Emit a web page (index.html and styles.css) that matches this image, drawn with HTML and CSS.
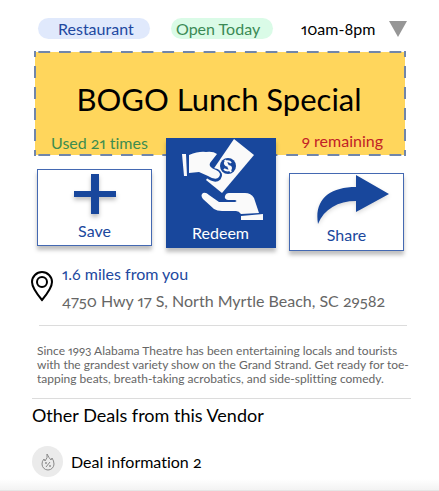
FILE: index.html
```html
<!DOCTYPE html>
<html lang="en">
<head>
<meta charset="utf-8">
<meta name="viewport" content="width=device-width, initial-scale=1">
<title>BOGO Lunch Special</title>
<link rel="stylesheet" href="styles.css">
</head>
<body>
<main class="page">
  <header class="meta">
    <span class="pill pill-category">Restaurant</span>
    <span class="pill pill-open">Open Today</span>
    <button class="hours" type="button">10am-8pm
      <svg class="caret" viewBox="0 0 18 16" aria-hidden="true"><path d="M0 0h18L9 16z"/></svg>
    </button>
  </header>

  <section class="coupon">
    <h1 class="coupon-title">BOGO Lunch Special</h1>
    <div class="coupon-stats">
      <span class="used">Used 21 times</span>
      <span class="remaining">9 remaining</span>
    </div>
  </section>

  <div class="actions">
    <button class="action save" type="button">
      <svg class="icon-plus" viewBox="0 0 42 42" aria-hidden="true"><path d="M17 1h8v17h17v6H25v17h-8V24H0v-6h17z"/></svg>
      <span>Save</span>
    </button>
    <button class="action redeem" type="button">
      <svg class="icon-redeem" viewBox="0 0 84 84" aria-hidden="true">
        <path class="light" d="M55 1 75 17 43 55 27 42z"/>
        <path class="hand-edge" d="M10 17Q25 12 34 15L38 17 30 27Q30 31 38 33Q43 36 40 40Q36 44 28 38L20 34 10 35z"/>
        <path class="light" d="M3 16H7L8 38H5zM10 17Q20 13 27 14Q34 13 38 16L31 25Q29 29 37 32Q43 35 40 39Q37 43 29 38L20 34 10 35z"/>
        <circle class="dark" cx="49" cy="28" r="8"/>
        <path class="dollar" d="M52 25C50 22 45 23 46 26C47 29 52 27 52 30C52 33 47 33 45 31M46 22L52 34"/>
        <path class="light" d="M24 55Q27 54 30 57L40 64H56Q59 63 56 62H49Q45 61 46 58Q47 55 50 55H66Q72 55 75 60L80 75 62 76Q60 73 57 73H43Q38 73 35 71L24 61Q21 57 24 55z"/>
        <path class="light" d="M62 78 84 76V82H62z"/>
      </svg>
      <span>Redeem</span>
    </button>
    <button class="action share" type="button">
      <svg class="icon-share" viewBox="0 0 72 49" aria-hidden="true"><path d="M39 0 72 19 39 37V26C21 26 7 34 1 49C-3 25 12 12 39 12z"/></svg>
      <span>Share</span>
    </button>
  </div>

  <section class="location">
    <svg class="icon-pin" viewBox="0 0 24 32" aria-hidden="true">
      <path d="M12 30Q2 18 2 12A10 10 0 0 1 22 12Q22 18 12 30z"/>
      <circle cx="12" cy="12" r="5"/>
    </svg>
    <div class="location-text">
      <a class="distance" href="#map">1.6 miles from you</a>
      <address class="address">4750 Hwy 17 S, North Myrtle Beach, SC 29582</address>
    </div>
  </section>

  <p class="about">Since 1993 Alabama Theatre has been entertaining locals and tourists with the grandest variety show on the Grand Strand. Get ready for toe-tapping beats, breath-taking acrobatics, and side-splitting comedy.</p>

  <section class="others">
    <h2 class="others-title">Other Deals from this Vendor</h2>
    <a class="deal" href="#deal-2">
      <span class="deal-badge">
        <svg class="icon-flame" viewBox="0 0 14 18" aria-hidden="true">
          <path d="M6 1Q8 5 10 7L11 5Q13 8 13 11A6 6 0 0 1 1 11Q1 8 3 6L4 8Q7 5 6 1zM9 9 5 14"/>
          <circle cx="5" cy="10" r=".6"/><circle cx="9" cy="13" r=".6"/>
        </svg>
      </span>
      Deal information 2
    </a>
  </section>
</main>
<div class="bottom-edge"></div>
</body>
</html>
```
FILE: styles.css
```css
* { box-sizing: border-box; }

body {
  margin: 0;
  min-height: 100vh;
  display: flex;
  flex-direction: column;
  background: #fff;
  color: #000;
  font-family: Lato, "Noto Sans", sans-serif;
  font-size: 16px;
  font-variant-ligatures: none;
  font-variant-numeric: oldstyle-nums proportional-nums;
  line-height: 20px;
}

button {
  font: inherit;
  font-variant-ligatures: none;
  font-variant-numeric: oldstyle-nums proportional-nums;
  color: inherit;
  cursor: pointer;
}

a { color: inherit; text-decoration: none; }

.page { padding: 18px 32px 0; }

.meta {
  display: flex;
  align-items: center;
  padding-left: 6px;
}

.pill {
  height: 21px;
  border-radius: 11px;
  line-height: 21px;
}

.pill-category {
  width: 112px;
  padding-left: 20px;
  background: #e0e9fc;
  color: #2148a0;
}

.pill-open {
  width: 102px;
  margin-left: 21px;
  padding-left: 5px;
  background: #dafbe7;
  color: #3b8a55;
}

.hours {
  display: flex;
  flex: 1;
  align-items: center;
  justify-content: space-between;
  margin-left: 28px;
  padding: 0;
  border: 0;
  background: none;
}

.caret { width: 18px; height: 16px; fill: #969696; }

.coupon {
  --dash-x: linear-gradient(90deg, #7186aa 30%, transparent 30% 70%, #7186aa 70%);
  --dash-y: linear-gradient(#7186aa 30%, transparent 30% 70%, #7186aa 70%);
  display: flex;
  flex-direction: column;
  height: 105px;
  margin: 12px 1px 0 2px;
  padding: 30px 23px 0 17px;
  background:
    var(--dash-x) top / 21px 2px,
    var(--dash-x) bottom / 21px 2px,
    var(--dash-y) left / 2px 21px,
    var(--dash-y) right / 2px 21px,
    linear-gradient(#ffd65c, #ffd65c) center / calc(100% - 2px) calc(100% - 2px);
  background-repeat: round no-repeat, round no-repeat, no-repeat round, no-repeat round, no-repeat;
}

.coupon-title {
  margin: 0;
  padding-left: 4px;
  font-size: 31px;
  font-weight: 400;
  line-height: 36px;
  text-align: center;
}

.coupon-stats {
  display: flex;
  justify-content: space-between;
  align-items: flex-start;
  margin-top: 14px;
}

.used { padding-top: 2px; color: #3d8d4f; }
.remaining { color: #c22227; }

.actions {
  position: relative;
  display: flex;
  align-items: flex-start;
  justify-content: space-between;
  margin: -18px 3px 0 5px;
}

.action {
  display: flex;
  flex-direction: column;
  align-items: center;
  padding: 0;
  border: 1px solid #4469b2;
  border-radius: 0;
  background: #fff;
  color: #1b489d;
  box-shadow: 0 4px 4px rgba(0, 0, 0, .25);
}

.action svg { fill: #18479c; }

.save { width: 115px; height: 77px; margin-top: 31px; }
.icon-plus { width: 42px; height: 42px; margin: 3px 0 6px; filter: drop-shadow(0 3px 2px rgba(0, 0, 0, .25)); }

.redeem {
  width: 110px;
  height: 110px;
  border: 0;
  background: #18479c;
  color: #fff;
}
.action .icon-redeem { width: 84px; height: 84px; margin-bottom: 1px; }
.icon-redeem .light { fill: #fafafa; }
.icon-redeem .dark { fill: #18479c; }
.icon-redeem .hand-edge { stroke: #18479c; stroke-width: 4; stroke-linejoin: round; }
.icon-redeem .dollar { fill: none; stroke: #fafafa; stroke-width: 2; }

.share { width: 115px; height: 78px; margin-top: 35px; }
.icon-share { width: 72px; height: 49px; margin: 1px 0 1px 13px; filter: drop-shadow(0 2px 2px rgba(0, 0, 0, .15)); }

.location {
  display: flex;
  gap: 8px;
  margin: 13px 0 0 7px;
  padding-bottom: 14px;
  border-bottom: 1px solid #dcdcdc;
}

.icon-pin {
  flex: none;
  width: 24px;
  height: 32px;
  margin: 6px 0 0 -9px;
  fill: none;
  stroke: #000;
  stroke-width: 2;
}

.location-text { display: flex; flex-direction: column; gap: 7px; }
.distance { color: #2148a0; }
.address { color: #666; font-style: normal; }

.about {
  margin: 0 -4px 0 0;
  padding: 18px 0 12px 5px;
  border-bottom: 1px solid #dcdcdc;
  color: #666;
  font-size: 12px;
  line-height: 14px;
}

.others-title {
  margin: 4px 0 0;
  font-size: 18px;
  font-weight: 400;
  line-height: 24px;
}

.deal {
  display: flex;
  align-items: center;
  gap: 8px;
  margin-top: 19px;
}

.deal-badge {
  display: flex;
  align-items: center;
  justify-content: center;
  width: 31px;
  height: 31px;
  border-radius: 50%;
  background: #ebebeb;
}

.icon-flame { width: 14px; height: 18px; fill: none; stroke: #8a8a8a; stroke-width: 1; }

.bottom-edge {
  height: 12px;
  margin-top: auto;
  border-bottom: 1px solid #e6e6e6;
  background: linear-gradient(#fff, #f3f3f3);
}
```
